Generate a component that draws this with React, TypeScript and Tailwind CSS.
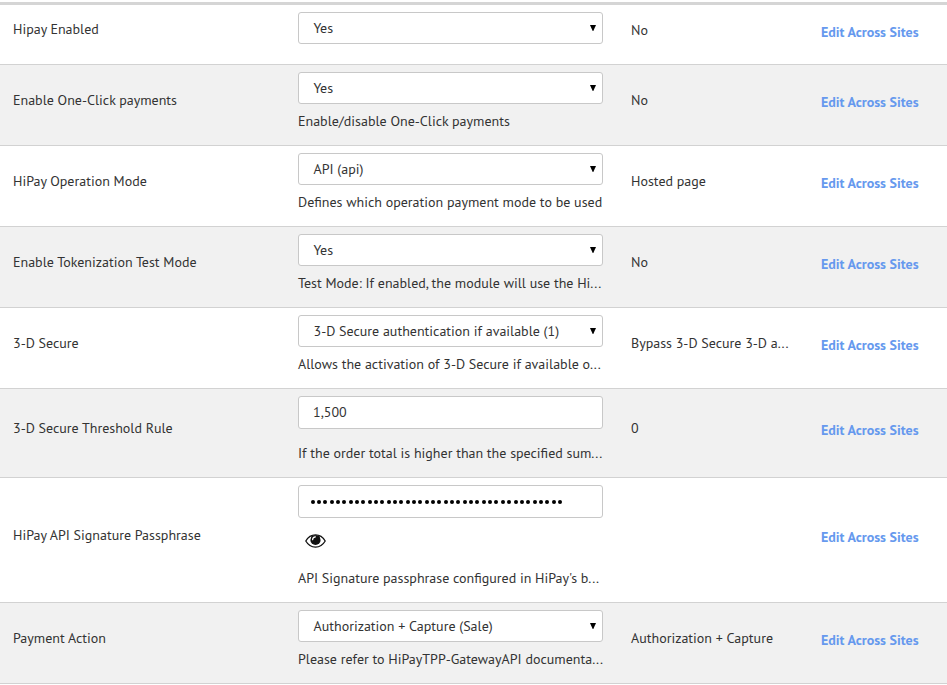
type Row = {
  label: string;
  kind: 'select' | 'text' | 'password';
  control?: string;
  help?: string;
  value?: string;
  height: string;
  first?: boolean;
};

const rows: Row[] = [
  { label: 'Hipay Enabled', kind: 'select', control: 'Yes', value: 'No', height: 'h-[60px]', first: true },
  { label: 'Enable One-Click payments', kind: 'select', control: 'Yes', help: 'Enable/disable One-Click payments', value: 'No', height: 'h-[81px]' },
  { label: 'HiPay Operation Mode', kind: 'select', control: 'API (api)', help: 'Defines which operation payment mode to be used', value: 'Hosted page', height: 'h-[81px]' },
  { label: 'Enable Tokenization Test Mode', kind: 'select', control: 'Yes', help: 'Test Mode: If enabled, the module will use the Hi...', value: 'No', height: 'h-[81px]' },
  { label: '3-D Secure', kind: 'select', control: '3-D Secure authentication if available (1)', help: 'Allows the activation of 3-D Secure if available o...', value: 'Bypass 3-D Secure 3-D a...', height: 'h-[81px]' },
  { label: '3-D Secure Threshold Rule', kind: 'text', control: '1,500', help: 'If the order total is higher than the specified sum...', value: '0', height: 'h-[89px]' },
  { label: 'HiPay API Signature Passphrase', kind: 'password', help: "API Signature passphrase configured in HiPay's b...", height: 'h-[125px]' },
  { label: 'Payment Action', kind: 'select', control: 'Authorization + Capture (Sale)', help: 'Please refer to HiPayTPP-GatewayAPI documenta...', value: 'Authorization + Capture', height: 'h-[81px]' },
];

function EyeIcon() {
  return (
    <svg className="ml-[7px] h-[14px] w-[21px]" viewBox="0 0 21 14" fill="none">
      <path d="M.8 7C3 3.200 6.300.9 10.500.9S18 3.200 20.200 7C18 10.800 14.700 13.100 10.500 13.100S3 10.800.8 7Z" stroke="#111" strokeWidth="1.300" />
      <path d="M6.500 1.700C8 1 13 1 14.500 1.700L15.600 6a5.100 5.100 0 0 1-10.200 0Z" fill="#111" />
      <path d="M7.600 5.700c0-1.700 1.100-2.800 2.800-2.900" stroke="#fff" strokeWidth="1.200" strokeLinecap="round" />
    </svg>
  );
}

function Control({ row }: { row: Row }) {
  if (row.kind === 'select') {
    return (
      <div className="flex h-8 items-center justify-between rounded-[3px] border border-[#c8c8c8] bg-white pr-[6px] pl-[14.500px]">
        <span>{row.control}</span>
        <svg className="h-[6px] w-[6px]" viewBox="0 0 6 6">
          <path d="M0 0h6L3.300 6h-.6Z" fill="#000" />
        </svg>
      </div>
    );
  }
  return (
    <div className="flex h-[33px] items-center rounded-[3px] border border-[#c8c8c8] bg-white pl-[14px]">
      {row.kind === 'text' ? (
        <span className="-mt-px">{row.control}</span>
      ) : (
        <div className="-ml-[2.500px] flex gap-[2.350px]">
          {Array.from({ length: 40 }, (_, i) => (
            <span key={i} className="size-1 shrink-0 rounded-full bg-black" />
          ))}
        </div>
      )}
    </div>
  );
}

export default function App() {
  return (
    <div className="h-[685px] w-[947px] overflow-hidden bg-white pt-[2px] font-['PT_Sans','Noto_Sans',sans-serif] text-[14px] leading-5 whitespace-nowrap text-[#333]">
      <div className="h-[3px] bg-[#d5d5d5]" />
      {rows.map((row) => (
        <div
          key={row.label}
          className={`grid grid-cols-[285px_305px_190px_1fr] border-b border-[#d2d2d2] pl-[13px] odd:bg-[#f1f1f1] ${row.height}`}
        >
          <div className={`flex items-center ${row.first ? 'pb-[11px]' : 'pb-[10px]'}`}>{row.label}</div>
          <div className="pt-[7px]">
            <Control row={row} />
            {row.kind === 'password' && (
              <div className="mt-4">
                <EyeIcon />
              </div>
            )}
            {row.help && (
              <div className={row.kind === 'select' ? 'mt-[7px]' : row.kind === 'text' ? 'mt-[14px]' : 'mt-5'}>
                {row.help}
              </div>
            )}
          </div>
          <div className={`flex items-center pl-7 ${row.first ? 'pb-[9px]' : 'pb-[10px]'}`}>{row.value}</div>
          <div className={`flex items-center pl-7 font-bold text-[#6699ee] ${row.first ? 'pb-[5px]' : 'pb-[6px]'}`}>
            <a href="#edit">Edit Across Sites</a>
          </div>
        </div>
      ))}
    </div>
  );
}
